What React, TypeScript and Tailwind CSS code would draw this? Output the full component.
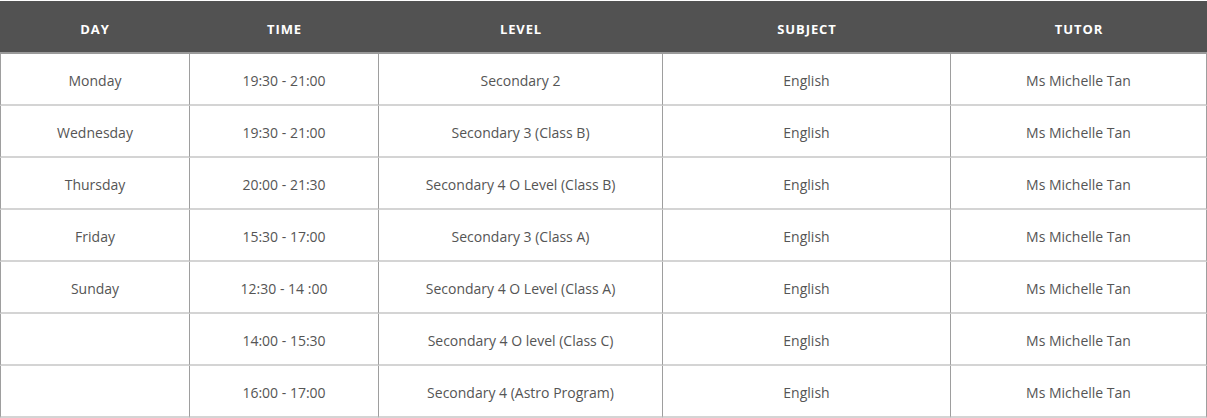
const headers = ['Day', 'Time', 'Level', 'Subject', 'Tutor'];

const rows: string[][] = [
  ['Monday', '19:30 - 21:00', 'Secondary 2', 'English', 'Ms Michelle Tan'],
  ['Wednesday', '19:30 - 21:00', 'Secondary 3 (Class B)', 'English', 'Ms Michelle Tan'],
  ['Thursday', '20:00 - 21:30', 'Secondary 4 O Level (Class B)', 'English', 'Ms Michelle Tan'],
  ['Friday', '15:30 - 17:00', 'Secondary 3 (Class A)', 'English', 'Ms Michelle Tan'],
  ['Sunday', '12:30 - 14 :00', 'Secondary 4 O Level (Class A)', 'English', 'Ms Michelle Tan'],
  ['', '14:00 - 15:30', 'Secondary 4 O level (Class C)', 'English', 'Ms Michelle Tan'],
  ['', '16:00 - 17:00', 'Secondary 4 (Astro Program)', 'English', 'Ms Michelle Tan'],
];

const colWidths = ['w-[190px]', 'w-[189px]', 'w-[284px]', 'w-[288px]', 'w-[256px]'];

export default function App() {
  return (
    <div className="w-[1207px] bg-white pt-px" style={{ fontFamily: '"Open Sans", "Liberation Sans", sans-serif' }}>
      <table className="w-full table-fixed border-separate border-spacing-0">
        <colgroup>
          {colWidths.map((w, i) => (
            <col key={i} className={w} />
          ))}
        </colgroup>
        <thead>
          <tr>
            {headers.map((h) => (
              <th
                key={h}
                className="h-[53px] bg-[#525252] border-b-2 border-[#9a9a9a] pt-[6px] text-center text-[13px] font-bold uppercase tracking-[0.07em] text-white"
              >
                {h}
              </th>
            ))}
          </tr>
        </thead>
        <tbody>
          {rows.map((row, r) => (
            <tr key={r}>
              {row.map((cell, c) => (
                <td
                  key={c}
                  className={`h-[52px] border-b-2 border-b-[#d4d4d4] border-r border-r-[#9e9e9e] pt-[2px] text-center text-[14px] text-[#555555] ${
                    c === 0 ? 'border-l border-l-[#9e9e9e]' : ''
                  }`}
                >
                  {cell}
                </td>
              ))}
            </tr>
          ))}
        </tbody>
      </table>
    </div>
  );
}
